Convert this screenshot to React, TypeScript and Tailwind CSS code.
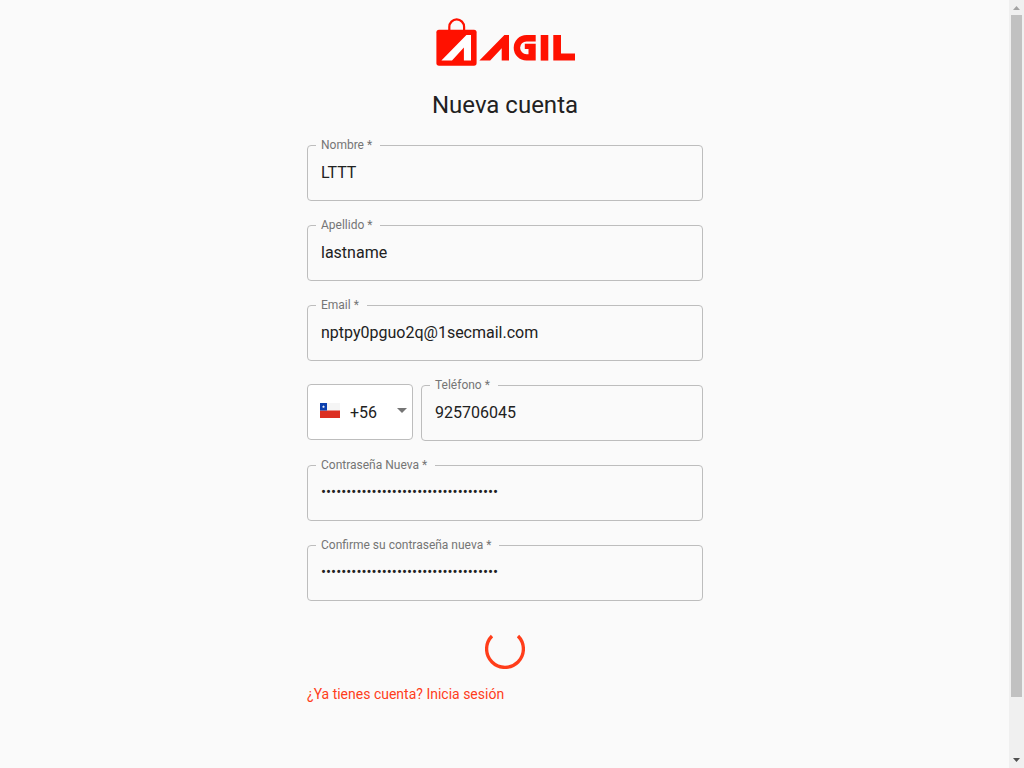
import { useId, useState } from "react";

function Logo() {
  return (
    <svg viewBox="-1 0 140 48" className="h-12 w-[140px]" role="img" aria-label="Agil">
      <path d="M13.3 13V9a7.4 7.6 0 0 1 14.8 0v4" fill="none" stroke="#ff1100" strokeWidth="2.2" />
      <rect x="0.4" y="11.7" width="40.2" height="36" rx="2.6" fill="#ff1100" />
      <path d="M5.4 42.6 30.4 17H35v25.6h-7.1V29.6L16 42.6Z" fill="#fff" />
      <g fill="#ff1100">
        <path d="M43.4 42.6 68.4 17H73v25.6h-7.3V30.2L54.2 42.6Z" />
        <path d="M99.7 17v6.4H90.5a6.4 6.4 0 0 0 0 12.8h2v-5.2h-3.7v-5.2h10.9v16.8H90.5a12.8 12.8 0 0 1 0-25.6Z" />
        <path d="M104.7 17h7.6v25.6h-7.6Z" />
        <path d="M117.3 17h7.7v18.6h14v7h-21.7Z" />
      </g>
    </svg>
  );
}

function ChileFlag() {
  return (
    <svg viewBox="0 0 20 15" className="mb-1 h-[15px] w-5 shrink-0" aria-hidden="true">
      <path d="M0 0h20v8H0Z" fill="#f5f5f5" />
      <path d="M0 7.5h20V15H0Z" fill="#dc2f22" />
      <path d="M0 0h7v7.5H0Z" fill="#0b3fae" />
      <path d="m3.5 2.1.4 1.1h1.2l-1 .8.4 1.2-1-.7-1 .7.4-1.2-1-.8h1.2Z" fill="#fff" />
    </svg>
  );
}

type FieldProps = { label: string; initial: string; type?: string };

function Field({ label, initial, type = "text" }: FieldProps) {
  const id = useId();
  const [value, setValue] = useState(initial);
  const size = type === "password" ? "text-[15px]" : "text-base";
  return (
    <fieldset className="min-w-0 flex-1 rounded border border-[#bdbdbd] px-2 pb-[9px]">
      <legend className="h-4 pr-2 pl-[5px] text-xs leading-4 text-[#757575]">
        <label htmlFor={id}>{label} *</label>
      </legend>
      <input
        id={id}
        type={type}
        value={value}
        required
        onChange={(e) => setValue(e.target.value)}
        className={`block h-[38px] w-full bg-transparent px-[5px] text-[#212121] outline-none ${size}`}
      />
    </fieldset>
  );
}

function CountryCode() {
  return (
    <div className="mb-px flex h-14 w-[106px] items-center rounded border border-[#bdbdbd] bg-white pr-[5px] pl-3">
      <ChileFlag />
      <select aria-label="Código de país" className="ml-[10px] h-full min-w-0 flex-1 appearance-none bg-transparent pt-[2px] text-base text-[#212121] outline-none">
        <option>+56</option>
      </select>
      <svg viewBox="0 0 10 5" className="mb-1 h-[5px] w-[10px] shrink-0" aria-hidden="true">
        <path d="M0 0h10L5 5Z" fill="#757575" />
      </svg>
    </div>
  );
}

function Spinner() {
  return (
    <svg viewBox="0 0 40 40" className="size-10" role="progressbar" aria-label="Cargando">
      <path d="M7 7A18.4 18.4 0 1 0 33 7" fill="none" stroke="#ff3d1a" strokeWidth="3.3" />
    </svg>
  );
}

function ScrollRail() {
  return (
    <div className="sticky top-0 flex h-screen w-[15px] shrink-0 flex-col items-center bg-[#f0f0f0]" aria-hidden="true">
      <svg viewBox="0 0 15 15" className="size-[15px] shrink-0">
        <path d="M4 10h7L7.5 6Z" fill="#a3a3a3" />
      </svg>
      <div className="flex w-full flex-1 flex-col px-[2px]">
        <div className="h-[92.4%] bg-[#c1c1c1]" />
      </div>
      <svg viewBox="0 0 15 15" className="size-[15px] shrink-0">
        <path d="M4 5h7L7.5 9Z" fill="#505050" />
      </svg>
    </div>
  );
}

export default function App() {
  return (
    <div className="flex min-h-screen bg-[#fafafa] font-['Roboto',sans-serif] text-[#212121]">
      <main className="flex flex-1 justify-center pt-[18px] pr-6 pb-14 pl-[25px]">
        <form className="flex w-full max-w-[396px] flex-col" onSubmit={(e) => e.preventDefault()}>
          <div className="flex justify-center">
            <Logo />
          </div>
          <h1 className="mt-[23px] text-center text-2xl leading-8">Nueva cuenta</h1>
          <div className="mt-4 flex flex-col gap-4">
            <Field label="Nombre" initial="LTTT" />
            <Field label="Apellido" initial="lastname" />
            <Field label="Email" initial="nptpy0pguo2q@1secmail.com" type="email" />
            <div className="flex items-end gap-2">
              <CountryCode />
              <Field label="Teléfono" initial="925706045" type="tel" />
            </div>
            <Field label="Contraseña Nueva" initial={"x".repeat(35)} type="password" />
            <Field label="Confirme su contraseña nueva" initial={"x".repeat(35)} type="password" />
          </div>
          <div className="mt-7 flex justify-center">
            <Spinner />
          </div>
          <a href="#login" className="mt-[15px] self-start text-sm leading-5 text-[#ff3d1a]">
            ¿Ya tienes cuenta? Inicia sesión
          </a>
        </form>
      </main>
      <ScrollRail />
    </div>
  );
}
